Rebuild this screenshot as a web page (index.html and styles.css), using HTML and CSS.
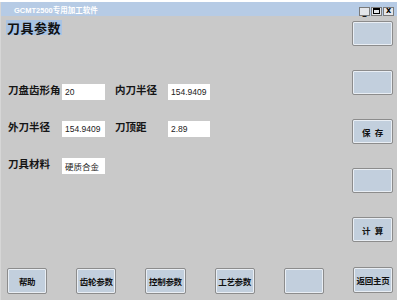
FILE: index.html
```html
<!DOCTYPE html>
<html lang="zh">
<head>
<meta charset="utf-8">
<title>GCMT2500专用加工软件</title>
<link rel="stylesheet" href="styles.css">
</head>
<body>
<div class="window">
  <div class="titlebar">
    <span class="title">GCMT2500专用加工软件</span>
    <div class="controls">
      <span class="ctl ctl-min">_</span>
      <span class="ctl ctl-max"><span class="sq"></span></span>
      <span class="ctl ctl-close">x</span>
    </div>
  </div>
  <div class="content">
    <div class="main">
      <div class="heading"><span class="sel">刀具参数</span></div>
      <div class="form">
        <label class="lbl">刀盘齿形角</label>
        <div class="field">20</div>
        <label class="lbl lbl2">内刀半径</label>
        <div class="field">154.9409</div>

        <label class="lbl">外刀半径</label>
        <div class="field">154.9409</div>
        <label class="lbl lbl2">刀顶距</label>
        <div class="field">2.89</div>

        <label class="lbl">刀具材料</label>
        <div class="field cjk">硬质合金</div>
      </div>
    </div>
    <div class="side">
      <button class="btn"></button>
      <button class="btn"></button>
      <button class="btn spaced">保 存</button>
      <button class="btn"></button>
      <button class="btn spaced">计 算</button>
    </div>
  </div>
  <div class="bottom">
    <button class="btn">帮助</button>
    <button class="btn">齿轮参数</button>
    <button class="btn">控制参数</button>
    <button class="btn">工艺参数</button>
    <button class="btn"></button>
    <button class="btn btn-home">返回主页</button>
  </div>
</div>
</body>
</html>
```
FILE: styles.css
```css
html, body {
  margin: 0;
  padding: 0;
  background: #ffffff;
}
body {
  width: 400px;
  height: 304px;
  overflow: hidden;
  font-family: "Liberation Sans", "Noto Sans CJK SC", sans-serif;
}
.window {
  margin-top: 2px;
  width: 397px;
  height: 298px;
  background: #c9c9c9;
  display: flex;
  flex-direction: column;
  box-sizing: border-box;
  border-left: 1px solid #d6d6d6;
}
.titlebar {
  height: 14px;
  background: #b6cbe5;
  display: flex;
  align-items: center;
  padding-left: 13px;
  padding-right: 3px;
  flex-shrink: 0;
}
.title {
  color: #ffffff;
  font-size: 7.5px;
  font-weight: bold;
  font-family: "Liberation Sans", "Noto Sans CJK SC", sans-serif;
}
.controls {
  margin-left: auto;
  display: flex;
  gap: 1px;
  margin-top: 4px;
}
.ctl {
  width: 11px;
  height: 9px;
  box-sizing: border-box;
  background: #e4e6ea;
  border: 1px solid #7a7a7a;
  font-size: 8px;
  font-weight: bold;
  line-height: 6px;
  color: #000;
  display: flex;
  justify-content: center;
  align-items: center;
  font-family: "DejaVu Sans", sans-serif;
}
.ctl-min {
  align-items: flex-end;
  line-height: 4px;
}
.sq {
  width: 5px;
  height: 3px;
  border: 1px solid #000;
  border-top-width: 2px;
}
.content {
  display: flex;
  flex: 1;
  padding: 0 4px 0 5px;
}
.main {
  flex: 1;
}
.heading {
  padding-top: 3px;
  height: 16px;
}
.sel {
  display: inline-block;
  background: #a9c3e3;
  color: #111;
  font-family: "Noto Sans CJK SC", sans-serif;
  font-weight: bold;
  font-size: 13px;
  line-height: 15px;
  padding: 0 1px;
  letter-spacing: 0.5px;
}
.form {
  margin-top: 49px;
  margin-left: 2px;
  display: grid;
  grid-template-columns: 54px 43px 63px 42px;
  grid-auto-rows: 16px;
  row-gap: 21px;
  align-items: center;
}
.lbl {
  font-family: "Noto Sans CJK SC", sans-serif;
  font-weight: bold;
  font-size: 10.5px;
  color: #151515;
  line-height: 12px;
  margin-top: -5px;
  white-space: nowrap;
}
.lbl2 {
  padding-left: 10px;
}
.field {
  background: #ffffff;
  height: 16px;
  font-size: 8.5px;
  line-height: 16px;
  padding-left: 3px;
  color: #222;
  font-family: "Liberation Sans", sans-serif;
  box-sizing: border-box;
}
.field.cjk {
  font-family: "Noto Sans CJK SC", sans-serif;
  font-size: 8.5px;
}
.side {
  width: 41px;
  display: flex;
  flex-direction: column;
  gap: 24px;
  padding-top: 5px;
}
.btn {
  width: 41px;
  height: 25px;
  padding: 0;
  margin: 0;
  background: #c2cfdd;
  border: 1px solid #8c8c8c;
  border-radius: 2px;
  box-shadow: inset 0 0 0 1px #e9eef4;
  font-family: "Noto Sans CJK SC", sans-serif;
  font-weight: bold;
  font-size: 8.5px;
  color: #111;
  white-space: pre;
  letter-spacing: -0.3px;
}
.btn.spaced {
  word-spacing: 3px;
}
.bottom {
  display: flex;
  gap: 29px;
  padding: 0 4px 6px 6px;
  flex-shrink: 0;
}
.bottom .btn {
  height: 26px;
}
.btn-home {
  margin-left: auto;
  margin-top: -1px;
}
```
